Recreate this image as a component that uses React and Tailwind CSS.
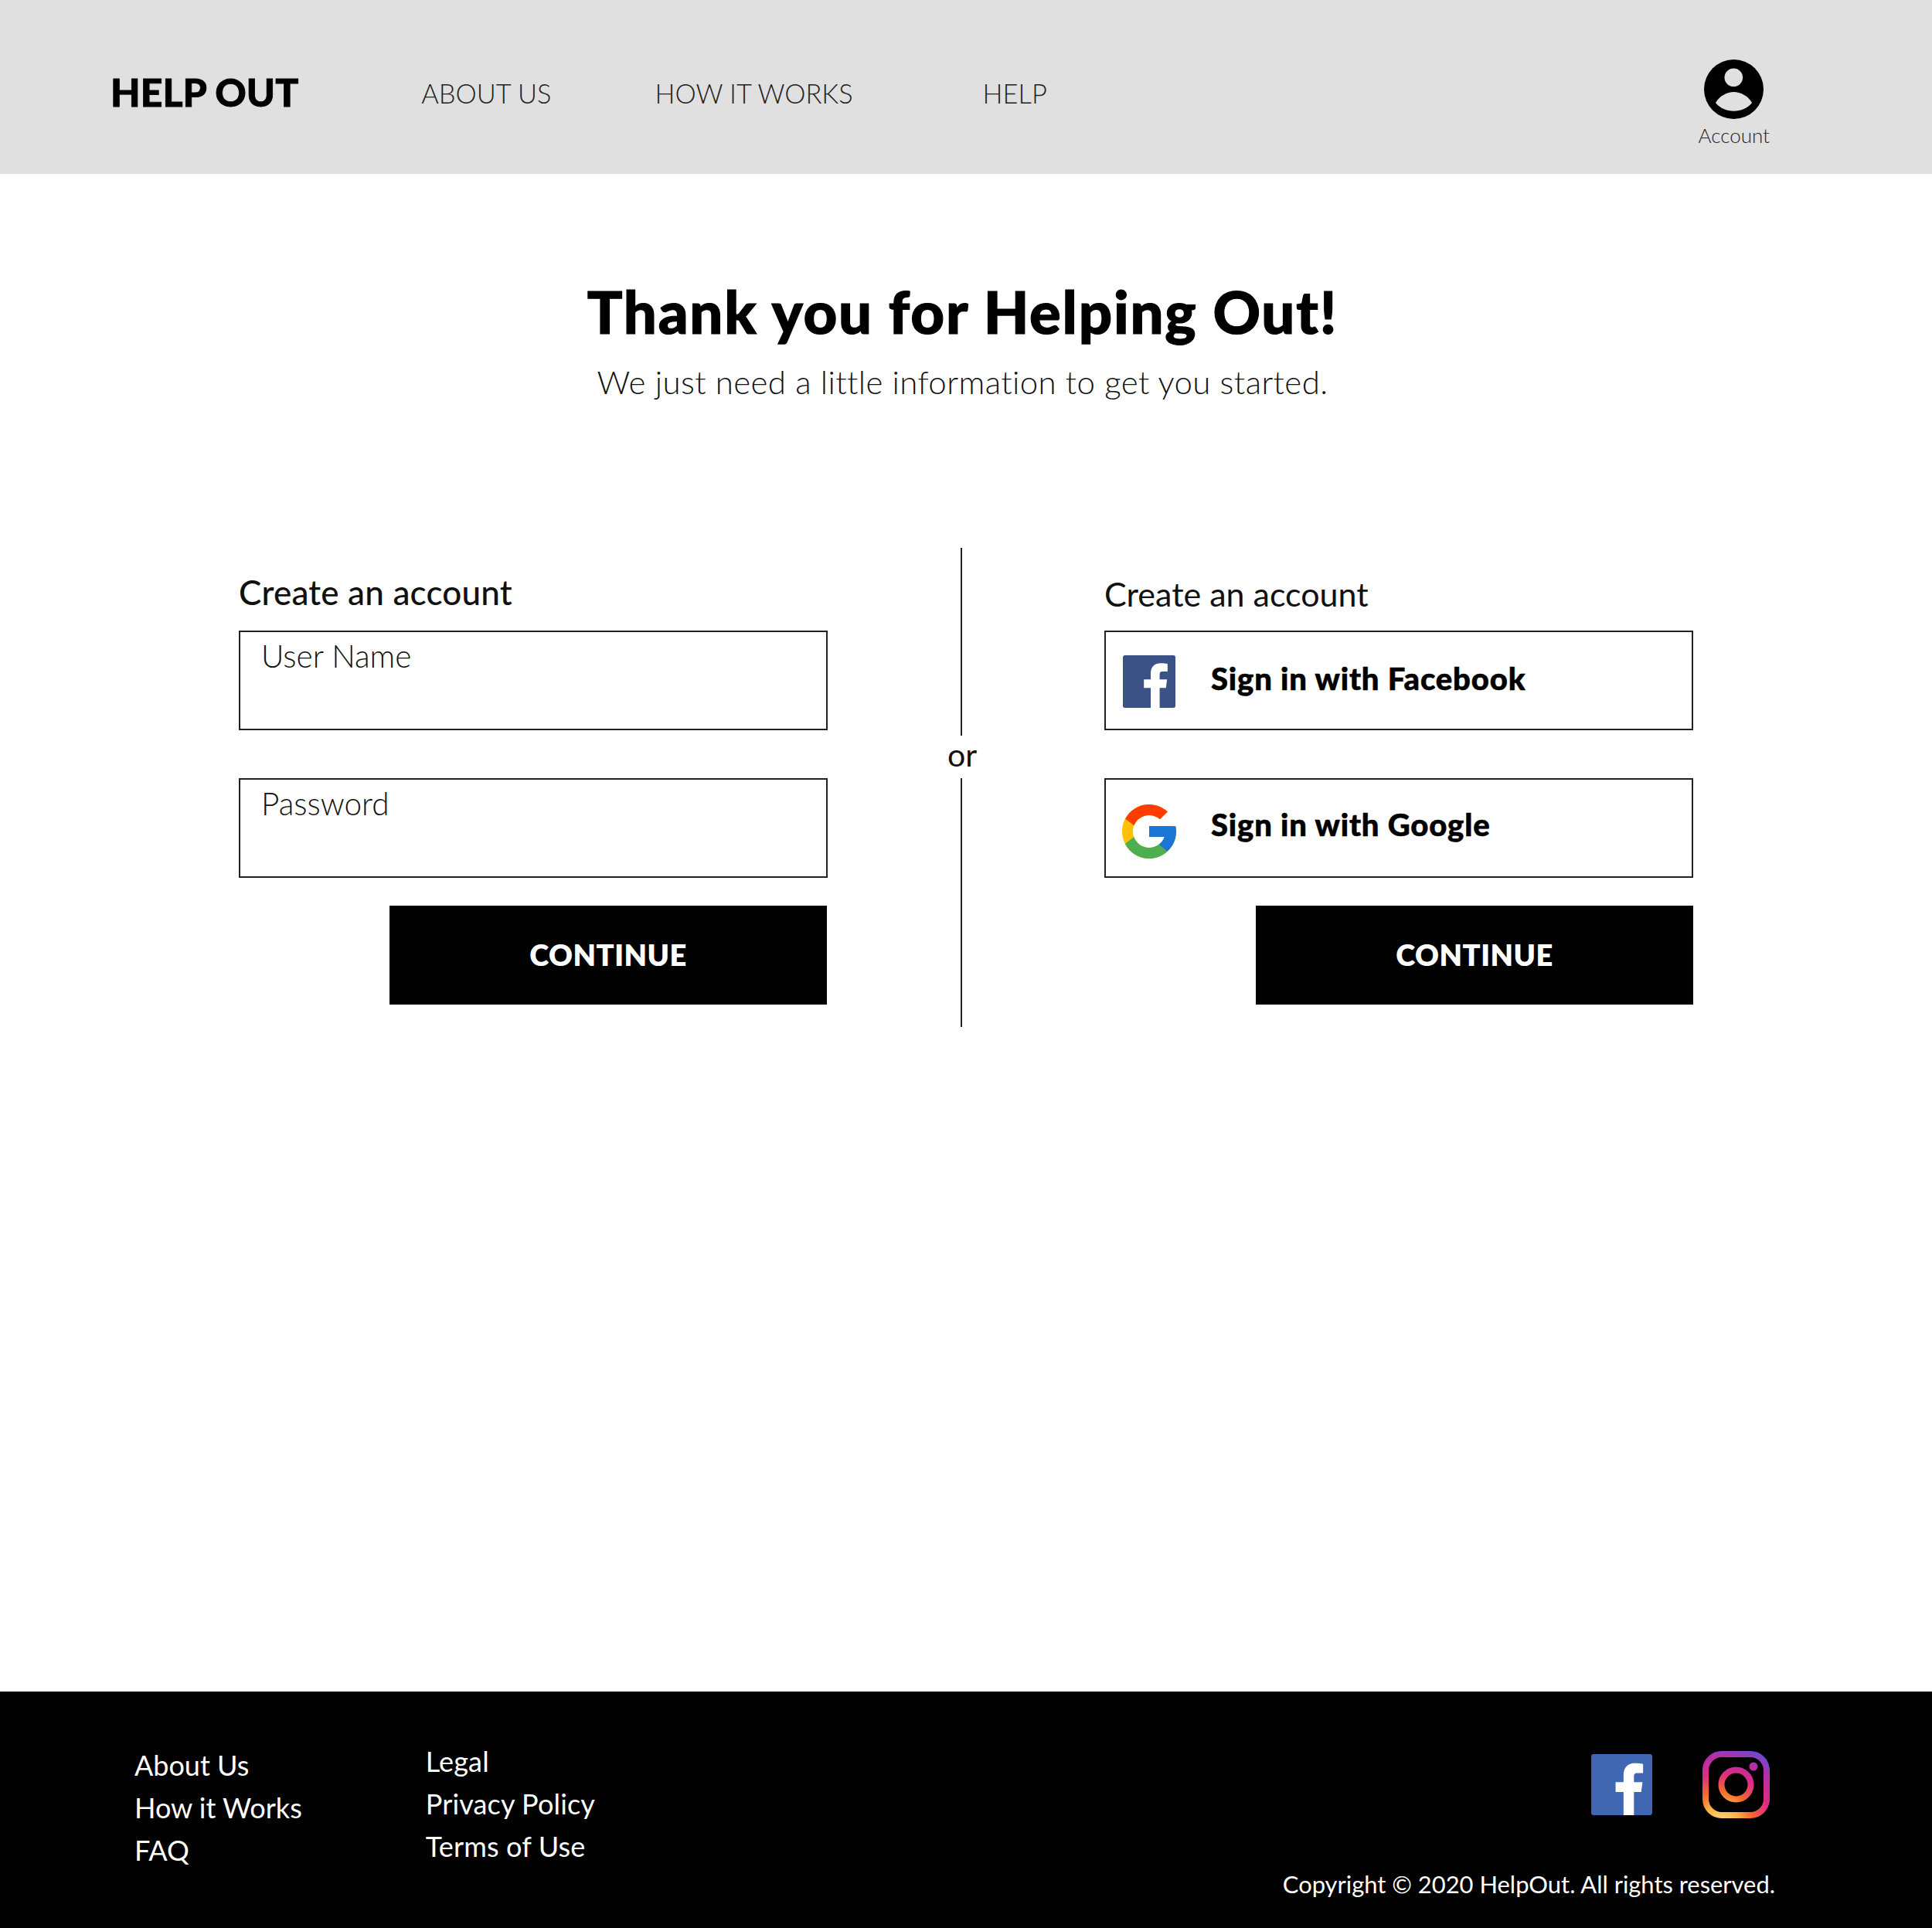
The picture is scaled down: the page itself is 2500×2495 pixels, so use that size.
const FbPath = "M53 100V62H40V46H53V34C53 21 61 15 72 15C77 15 82 15.5 85 16V31H76C71 31 70 33 70 38V46H84L82 62H70V100Z";

function Fb({ size, bg, className = "" }) {
  return (
    <svg width={size} height={size} viewBox="0 0 100 100" className={className}>
      <rect width="100" height="100" rx="4" fill={bg} />
      <path d={FbPath} fill="#fff" />
    </svg>
  );
}

function Google({ size, className = "" }) {
  return (
    <svg width={size} height={size} viewBox="4 4 40 40" className={className}>
      <path fill="#FFC107" d="M43.611,20.083H42V20H24v8h11.303c-1.649,4.657-6.08,8-11.303,8c-6.627,0-12-5.373-12-12c0-6.627,5.373-12,12-12c3.059,0,5.842,1.154,7.961,3.039l5.657-5.657C34.046,6.053,29.268,4,24,4C12.955,4,4,12.955,4,24c0,11.045,8.955,20,20,20c11.045,0,20-8.955,20-20C44,22.659,43.862,21.35,43.611,20.083z" />
      <path fill="#FF3D00" d="M6.306,14.691l6.571,4.819C14.655,15.108,18.961,12,24,12c3.059,0,5.842,1.154,7.961,3.039l5.657-5.657C34.046,6.053,29.268,4,24,4C16.318,4,9.656,8.337,6.306,14.691z" />
      <path fill="#4CAF50" d="M24,44c5.166,0,9.86-1.977,13.409-5.192l-6.19-5.238C29.211,35.091,26.715,36,24,36c-5.202,0-9.619-3.317-11.283-7.946l-6.522,5.025C9.505,39.556,16.227,44,24,44z" />
      <path fill="#1976D2" d="M43.611,20.083H42V20H24v8h11.303c-0.792,2.237-2.231,4.166-4.087,5.571c0.001-0.001,0.002-0.001,0.003-0.002l6.19,5.238C36.971,39.205,44,34,44,24C44,22.659,43.862,21.35,43.611,20.083z" />
    </svg>
  );
}

function Instagram() {
  return (
    <svg width="87" height="87" viewBox="0 0 87 87">
      <defs>
        <radialGradient id="ig" cx="24" cy="92" r="105" gradientUnits="userSpaceOnUse">
          <stop offset="0" stopColor="#ffdd7a" />
          <stop offset="0.22" stopColor="#fcaf45" />
          <stop offset="0.38" stopColor="#f56b2e" />
          <stop offset="0.6" stopColor="#de2a85" />
          <stop offset="0.8" stopColor="#b52fa8" />
          <stop offset="1" stopColor="#5b51d8" />
        </radialGradient>
      </defs>
      <rect x="4" y="4" width="79" height="79" rx="21" fill="none" stroke="url(#ig)" strokeWidth="8" />
      <circle cx="43.5" cy="43.5" r="19" fill="none" stroke="url(#ig)" strokeWidth="8" />
      <circle cx="66" cy="20" r="5.5" fill="url(#ig)" />
    </svg>
  );
}

function Account() {
  return (
    <svg width="77" height="77" viewBox="0 0 77 77">
      <circle cx="38.5" cy="38.5" r="38.5" fill="#000" />
      <circle cx="38.3" cy="23.3" r="11.8" fill="#e0e0e0" />
      <path d="M15 56C20 47 30 42 38.5 42C47 42 57 47 62 56C57 63 47 66.7 38.5 66.7C30 66.7 20 63 15 56Z" fill="#e0e0e0" />
    </svg>
  );
}

function Field({ label, className = "" }) {
  return (
    <div className={`h-[129px] border-2 border-[#222] pl-[27px] pt-[6px] text-[40.5px] leading-[50px] font-light text-[#111] ${className}`}>
      {label}
    </div>
  );
}

function SocialBox({ icon, label, className = "", textClass = "" }) {
  return (
    <div className={`h-[129px] border-2 border-[#222] flex items-center pl-[21px] ${className}`}>
      <div className="w-[70px] flex justify-center">{icon}</div>
      <span className={`ml-[45px] text-[40px] leading-[50px] font-black tracking-[0.85px] text-black [-webkit-text-stroke:0.6px_black] ${textClass}`}>{label}</span>
    </div>
  );
}

function Continue({ className = "" }) {
  return (
    <div className={`mt-[36px] ml-auto w-[566px] h-[128px] pb-[2px] bg-black text-white flex items-center justify-center text-[38px] font-extrabold tracking-[0.5px] ${className}`}>
      CONTINUE
    </div>
  );
}

export default function App() {
  return (
    <div className="w-[2500px] h-[2495px] flex flex-col bg-white font-['Lato',sans-serif] text-black overflow-hidden">
      <header className="h-[225px] shrink-0 bg-[#e0e0e0] flex items-start relative">
        <div className="ml-[143px] mt-[89px] text-[50px] leading-[60px] font-black whitespace-nowrap [-webkit-text-stroke:0.8px_black]">HELP OUT</div>
        <nav className="mt-[97px] text-[34.4px] leading-[48px] font-light text-[#222] flex">
          <span className="ml-[159px]">ABOUT US</span>
          <span className="ml-[134px]">HOW IT WORKS</span>
          <span className="ml-[168px]">HELP</span>
        </nav>
        <div className="ml-auto mr-[210px] mt-[77px] flex flex-col items-center">
          <Account />
          <span className="mt-[5px] text-[26px] leading-[32px] font-light text-[#222]">Account</span>
        </div>
      </header>

      <main className="flex-1 flex flex-col">
        <h1 className="mt-[134px] pr-[9px] text-center text-[76px] leading-[88px] font-black tracking-[1.8px] [-webkit-text-stroke:1.2px_black]">Thank you for Helping Out!</h1>
        <p className="mt-[19px] pr-[9px] text-center text-[42px] leading-[56px] font-light tracking-[0.4px] text-[#111]">We just need a little information to get you started.</p>

        <div className="mt-[187px] ml-[309px] flex">
          <section className="w-[762px] pt-[28px]">
            <h2 className="text-[44px] leading-[58px] font-medium tracking-[0.2px] text-[#111]">Create an account</h2>
            <Field label="User Name" className="mt-[21px]" />
            <Field label="Password" className="mt-[62px]" />
            <Continue className="mr-[1px]" />
          </section>

          <div className="w-[358px] shrink-0 pl-[172px] flex flex-col items-start">
            <div className="w-[2px] h-[243px] bg-[#222]" />
            <div className="h-[55px] -ml-[17px] -translate-y-[3px] flex items-center text-[41px] font-normal text-[#111]">or</div>
            <div className="w-[2px] h-[322px] bg-[#222]" />
          </div>

          <section className="w-[762px] pt-[31px]">
            <h2 className="text-[43px] leading-[58px] font-normal text-[#111]">Create an account</h2>
            <SocialBox icon={<Fb size={68} bg="#3b5286" className="mt-[2px]" />} label="Sign in with Facebook" className="mt-[18px]" textClass="-mt-[5px]" />
            <SocialBox icon={<Google size={70} className="mt-[8px]" />} label="Sign in with Google" className="mt-[62px]" textClass="-mt-[10px]" />
            <Continue />
          </section>
        </div>
      </main>

      <footer className="h-[306px] shrink-0 bg-black text-white flex relative">
        <ul className="ml-[174px] mt-[68px] text-[36px] leading-[55px] font-normal">
          <li>About Us</li>
          <li>How it Works</li>
          <li>FAQ</li>
        </ul>
        <ul className="ml-[160px] mt-[63px] text-[36px] leading-[55px] font-normal tracking-[0.15px]">
          <li>Legal</li>
          <li>Privacy Policy</li>
          <li>Terms of Use</li>
        </ul>
        <div className="ml-auto mr-[204px] mt-[77px] flex flex-col items-end">
          <div className="flex items-center gap-[65px] mr-[6px]">
            <Fb size={79} bg="#4267b2" />
            <Instagram />
          </div>
          <div className="mr-[-1px] mt-[66px] text-[30.9px] leading-[40px] font-normal whitespace-nowrap">Copyright © 2020 HelpOut. All rights reserved.</div>
        </div>
      </footer>
    </div>
  );
}
